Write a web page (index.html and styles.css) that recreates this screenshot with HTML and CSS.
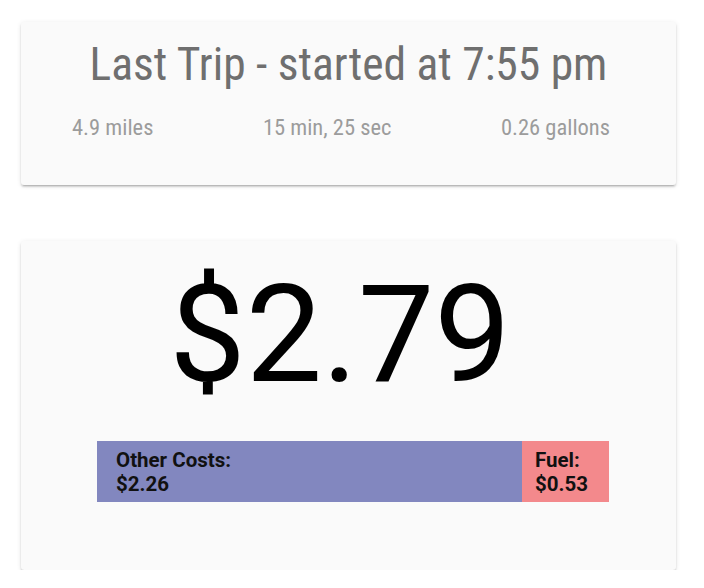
FILE: index.html
```html
<!DOCTYPE html>
<html>
<head>
<meta charset="utf-8">
<link rel="stylesheet" href="styles.css">
</head>
<body>
<main class="page">
  <section class="card trip">
    <h1 class="trip-title">Last Trip - started at 7:55 pm</h1>
    <div class="trip-stats">
      <span class="stat">4.9 miles</span>
      <span class="stat">15 min, 25 sec</span>
      <span class="stat">0.26 gallons</span>
    </div>
  </section>
  <section class="card cost">
    <div class="total">$2.79</div>
    <div class="breakdown">
      <div class="seg seg-other" style="width: 83%">
        <span>Other Costs:</span>
        <span>$2.26</span>
      </div>
      <div class="seg seg-fuel" style="width: 17%">
        <span>Fuel:</span>
        <span>$0.53</span>
      </div>
    </div>
  </section>
</main>
</body>
</html>
```
FILE: styles.css
```css
html, body {
  margin: 0;
  padding: 0;
  background: #ffffff;
}
body {
  font-family: Roboto, "Noto Sans", sans-serif;
}
.page {
  display: flex;
  flex-direction: column;
  gap: 56px;
  padding: 22px 0 0 21px;
  width: 655px;
}
.card {
  background: #fafafa;
  border-radius: 3px;
  box-shadow: 0 2px 2px rgba(0,0,0,0.14), 0 1px 5px rgba(0,0,0,0.10), 0 3px 1px -2px rgba(0,0,0,0.12);
  box-sizing: border-box;
}
.trip {
  height: 163px;
  padding-top: 18px;
}
.trip-title {
  margin: 0;
  text-align: center;
  font-weight: 400;
  font-size: 45.5px;
  font-stretch: 75%;
  line-height: 50px;
  color: #6f6f6f;
}
.trip-stats {
  display: flex;
  justify-content: space-between;
  padding: 0 66px 0 51px;
  margin-top: 25px;
  font-size: 22.5px;
  font-stretch: 75%;
  line-height: 24px;
  color: #9c9c9c;
}
.cost {
  height: 329px;
  padding-top: 19px;
}
.total {
  text-align: center;
  padding-right: 17px;
  font-size: 136px;
  line-height: 150px;
  color: #000;
  font-weight: 400;
}
.breakdown {
  display: flex;
  margin: 31px 67px 0 76px;
  height: 61px;
}
.seg {
  display: flex;
  flex-direction: column;
  justify-content: center;
  box-sizing: border-box;
  font-weight: 700;
  font-size: 20.5px;
  line-height: 24px;
  color: #111;
}
.seg-other {
  background: #8287bf;
  padding-left: 19px;
}
.seg-fuel {
  background: #f3898c;
  padding-left: 13px;
}
```
